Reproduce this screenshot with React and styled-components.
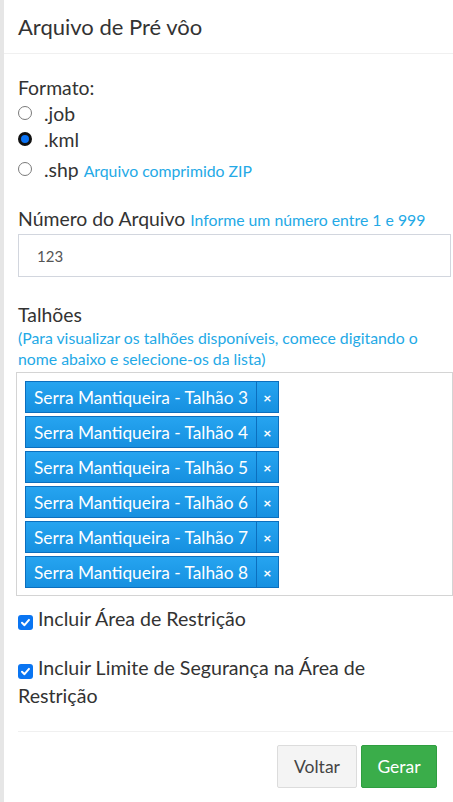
import React from "react";
import styled, { createGlobalStyle } from "styled-components";

const Global = createGlobalStyle`
  html, body { margin: 0; padding: 0; background: #fff; }
  body {
    font-family: Lato, "Open Sans", "Noto Sans", sans-serif;
    color: #333;
    -webkit-font-smoothing: antialiased;
  }
  * { box-sizing: border-box; }
`;

const Page = styled.div`
  width: 453px;
  min-height: 802px;
  display: flex;
  flex-direction: column;
  border-left: 4px solid #e6e6e6;
`;

const Header = styled.div`
  height: 54px;
  display: flex;
  align-items: center;
  padding: 0 14px;
  border-bottom: 1px solid #f0f0f0;
`;

const Title = styled.h4`
  margin: 0;
  font-size: 22px;
  font-weight: 400;
  color: #333;
  padding-bottom: 1px;
`;

const Body = styled.div`
  padding: 21px 0 0 14px;
  display: flex;
  flex-direction: column;
`;

const Label = styled.div`
  font-size: 19.4px;
  line-height: 25px;
  color: #333;
  margin-top: ${(p) => p.$mt || 0}px;
`;

const Hint = styled.span`
  font-size: 15.8px;
  color: #24a9e6;
`;

const HelpBlock = styled.div`
  font-size: 15.8px;
  line-height: 21px;
  color: #24a9e6;
  padding-right: 12px;
`;

const RadioRow = styled.label`
  display: flex;
  align-items: center;
  height: 26px;
  margin-top: ${(p) => p.$mt || 0}px;
  font-size: 19.4px;
  color: #333;
`;

const RadioDot = styled.span`
  width: 14px;
  height: 14px;
  border-radius: 50%;
  margin-right: 12px;
  flex: none;
  border: ${(p) => (p.$checked ? "3px solid #111" : "1px solid #7a7a7a")};
  background: ${(p) => (p.$checked ? "#0a73f5" : "#fff")};
`;

const RadioText = styled.span`
  display: flex;
  align-items: baseline;
  gap: 5px;
`;

const Input = styled.div`
  margin-top: 2px;
  height: 43px;
  border: 1px solid #d2d6de;
  display: flex;
  align-items: center;
  padding-left: 18px;
  font-size: 15px;
  color: #555;
  margin-right: 2px;
`;

const TagBox = styled.div`
  margin-top: 3px;
  border: 1px solid #d4d4d4;
  padding: 8px 8px 7px 8px;
  display: flex;
  flex-direction: column;
  align-items: flex-start;
  gap: 3px;
  margin-left: -2px;
`;

const Tag = styled.div`
  display: flex;
  height: 32px;
  border: 1px solid #0c6fbe;
  background: linear-gradient(#26a4f0, #1690e0);
  color: #fff;
  font-size: 17.3px;
`;

const TagText = styled.span`
  display: flex;
  align-items: center;
  padding: 0 8px 0 8px;
  border-right: 1px solid #0c6fbe;
`;

const TagRemove = styled.span`
  width: 21px;
  display: flex;
  align-items: center;
  justify-content: center;
  font-size: 14px;
  font-weight: 700;
`;

const CheckRow = styled.div`
  display: block;
  margin-top: ${(p) => p.$mt || 0}px;
  font-size: 19.6px;
  line-height: ${(p) => p.$lh || 27}px;
  color: #333;
  padding-right: 14px;
`;

const CheckBox = styled.span`
  display: inline-flex;
  vertical-align: -2px;
  width: 15px;
  height: 15px;
  border-radius: 3px;
  background: #0a75f2;
  align-items: center;
  justify-content: center;
  margin-right: 5px;
`;

const Footer = styled.div`
  margin-top: 21px;
  margin-left: 14px;
  border-top: 1px solid #f0f0f0;
  padding: 13px 16px 12px 0;
  display: flex;
  justify-content: flex-end;
  gap: 4px;
`;

const Button = styled.button`
  height: 43px;
  width: ${(p) => (p.$primary ? 76 : 80)}px;
  padding: 0;
  font-family: inherit;
  font-size: 17.5px;
  border-radius: 2px;
  border: 1px solid ${(p) => (p.$primary ? "#2f9e40" : "#dcdcdc")};
  background: ${(p) => (p.$primary ? "#3aad4a" : "#f4f4f4")};
  color: ${(p) => (p.$primary ? "#fff" : "#444")};
`;

const Check = () => (
  <svg width="11" height="11" viewBox="0 0 12 12">
    <path d="M2.2 6.3 L4.9 8.9 L9.8 3.2" fill="none" stroke="#fff" strokeWidth="2.2" strokeLinecap="round" strokeLinejoin="round" />
  </svg>
);

const tags = [3, 4, 5, 6, 7, 8];

export default function App() {
  return (
    <>
      <Global />
      <Page>
        <Header>
          <Title>Arquivo de Pré vôo</Title>
        </Header>
        <Body>
          <Label>Formato:</Label>
          <RadioRow>
            <RadioDot />
            <RadioText>.job</RadioText>
          </RadioRow>
          <RadioRow>
            <RadioDot $checked />
            <RadioText>.kml</RadioText>
          </RadioRow>
          <RadioRow $mt={4}>
            <RadioDot />
            <RadioText>
              .shp <Hint>Arquivo comprimido ZIP</Hint>
            </RadioText>
          </RadioRow>

          <Label $mt={24}>
            Número do Arquivo <Hint>Informe um número entre 1 e 999</Hint>
          </Label>
          <Input>123</Input>

          <Label $mt={25}>Talhões</Label>
          <HelpBlock>
            (Para visualizar os talhões disponíveis, comece digitando o nome abaixo e selecione-os da lista)
          </HelpBlock>
          <TagBox>
            {tags.map((n) => (
              <Tag key={n}>
                <TagText>Serra Mantiqueira - Talhão {n}</TagText>
                <TagRemove>×</TagRemove>
              </Tag>
            ))}
          </TagBox>

          <CheckRow $mt={9}>
            <CheckBox>
              <Check />
            </CheckBox>
            Incluir Área de Restrição
          </CheckRow>
          <CheckRow $mt={22} $lh={28}>
            <CheckBox>
              <Check />
            </CheckBox>
            Incluir Limite de Segurança na Área de Restrição
          </CheckRow>
        </Body>
        <Footer>
          <Button>Voltar</Button>
          <Button $primary>Gerar</Button>
        </Footer>
      </Page>
    </>
  );
}
